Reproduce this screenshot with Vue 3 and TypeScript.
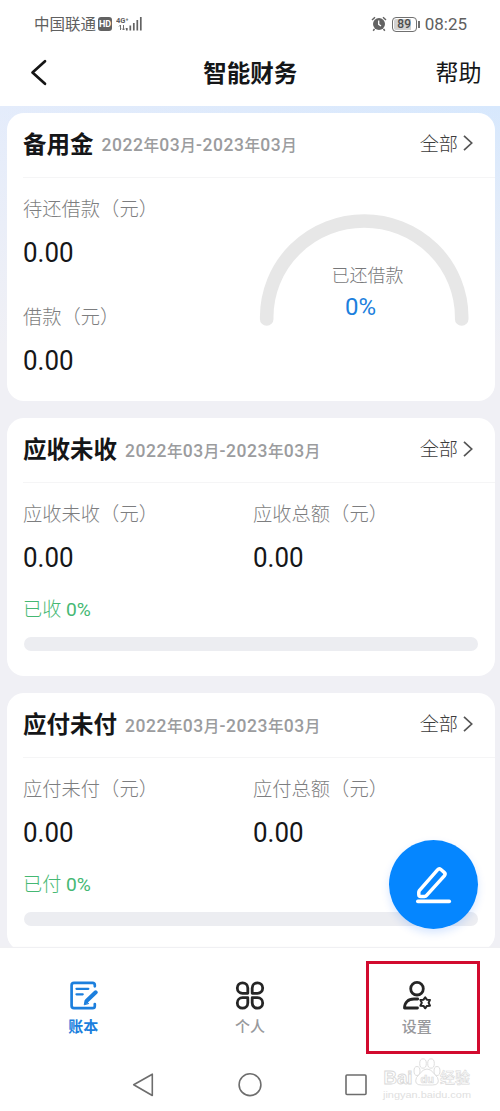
<script setup lang="ts">
interface Metric {
  label: string
  value: string
}

interface LedgerCard {
  title: string
  metrics: Metric[]
  progress: string
}

interface Piece {
  text: string
  numeric: boolean
}

const period = '2022年03月-2023年03月'

const periodPieces: Piece[] = (period.match(/[\d-]+|[^\d-]+/g) ?? []).map((text) => ({
  text,
  numeric: /[\d-]/.test(text),
}))

const pettyCash: Metric[] = [
  { label: '待还借款（元）', value: '0.00' },
  { label: '借款（元）', value: '0.00' },
]

const ledgers: LedgerCard[] = [
  {
    title: '应收未收',
    metrics: [
      { label: '应收未收（元）', value: '0.00' },
      { label: '应收总额（元）', value: '0.00' },
    ],
    progress: '已收',
  },
  {
    title: '应付未付',
    metrics: [
      { label: '应付未付（元）', value: '0.00' },
      { label: '应付总额（元）', value: '0.00' },
    ],
    progress: '已付',
  },
]
</script>

<template>
  <div class="screen" lang="zh-CN">
    <div class="status">
      <span class="carrier">中国联通</span>
      <span class="hd">HD</span>
      <svg class="signal" width="28" height="18" viewBox="0 0 28 18">
        <text x="0" y="8" class="net">4G⁺</text>
        <path d="M4.500 10v5M3 11.500l1.500-1.500M7.500 10v5M6 13.500l1.500 1.500 1.500-1.500" class="arrows" />
        <path d="M10.800 13v2.500M14.300 10.500v5M17.800 8v7.500M21.300 5v10.500M24.800 2v13.500" class="bars" />
      </svg>
      <span class="grow"></span>
      <svg class="alarm" width="16" height="16" viewBox="0 0 16 16">
        <circle cx="8" cy="8" r="6" fill="#626262" />
        <path d="M1 4l3-2.700M15 4l-3-2.700M3.500 13l-1.300 1.700M12.500 13l1.300 1.700" stroke="#626262" stroke-width="1.500" />
        <path d="M7.700 4.500v3.800l2.300 1.700" stroke="#fff" stroke-width="1.300" fill="none" />
      </svg>
      <span class="battery">89</span>
      <span class="battery-tip"></span>
      <span class="clock">08:25</span>
    </div>

    <div class="navbar">
      <svg class="back" width="18" height="28" viewBox="0 0 18 28">
        <path d="M15 2.200L2.500 13.500L15 24.800" fill="none" stroke="#151515" stroke-width="2.700" stroke-linejoin="round" stroke-linecap="round" />
      </svg>
      <h1>智能财务</h1>
      <span class="help">帮助</span>
    </div>

    <main class="content">
      <section class="card first">
        <header>
          <h2>备用金</h2>
          <span class="period"><span v-for="(p, i) in periodPieces" :key="i" :class="{ digits: p.numeric }">{{ p.text }}</span></span>
          <span class="all">全部</span>
          <svg class="chev" width="10" height="18" viewBox="0 0 10 18"><path d="M1 1.800l7.700 7.200L1 16.200" /></svg>
        </header>
        <div class="petty">
          <div class="stack">
            <div v-for="m in pettyCash" :key="m.label" class="metric">
              <div class="label">{{ m.label }}</div>
              <div class="value">{{ m.value }}</div>
            </div>
          </div>
          <div class="gauge">
            <svg width="212" height="116" viewBox="0 0 212 116">
              <path d="M8.700 106v-2a97.500 96 0 0 1 195 0v2" fill="none" stroke="#e7e7e7" stroke-width="13.600" stroke-linecap="round" />
            </svg>
            <div class="gauge-text">
              <span>已还借款</span>
              <b>0%</b>
            </div>
          </div>
        </div>
      </section>

      <section v-for="card in ledgers" :key="card.title" class="card ledger">
        <header>
          <h2>{{ card.title }}</h2>
          <span class="period"><span v-for="(p, i) in periodPieces" :key="i" :class="{ digits: p.numeric }">{{ p.text }}</span></span>
          <span class="all">全部</span>
          <svg class="chev" width="10" height="18" viewBox="0 0 10 18"><path d="M1 1.800l7.700 7.200L1 16.200" /></svg>
        </header>
        <div class="pair">
          <div v-for="m in card.metrics" :key="m.label" class="metric">
            <div class="label">{{ m.label }}</div>
            <div class="value">{{ m.value }}</div>
          </div>
        </div>
        <div class="progress-label">{{ card.progress }} <span>0%</span></div>
        <div class="track"></div>
      </section>
    </main>

    <button class="fab" type="button" aria-label="edit">
      <svg width="38" height="40" viewBox="0 0 38 40">
        <path d="M4.300 26.700L22.500 5.800q1.600-1.800 3.400-.3l3.300 2.900q1.700 1.500.1 3.400L11.600 31.400q-.8 1-2.100 1H5.800q-2 0-2-2v-2.200q0-.8.500-1.500z" fill="none" stroke="#fff" stroke-width="3.500" stroke-linejoin="round" />
        <path d="M2.800 37.400h31.500" stroke="#fff" stroke-width="3.600" stroke-linecap="round" />
      </svg>
    </button>

    <nav class="tabs">
      <div class="tab active">
        <svg width="30" height="30" viewBox="-1 -0.500 30 30" fill="none" stroke="#1c7fdd" stroke-linecap="round" stroke-linejoin="round">
          <path d="M25.800 5.800V4.500q0-2.200-2.200-2.200H5Q2.600 2.300 2.600 4.700v20.600q0 2.400 2.400 2.400h18.600q2.200 0 2.200-2.200v-2" stroke-width="2.700" />
          <path d="M7.500 8.300h11.800M7.500 13.800h6.200" stroke-width="2.300" />
          <path d="M26.700 11.800L17.800 20.300" stroke-width="4" />
          <path d="M15.300 23.900l.9-4.100 3.200 3z" fill="#1c7fdd" stroke-width="1" />
        </svg>
        <span>账本</span>
      </div>
      <div class="tab">
        <svg width="30" height="30" viewBox="0 -0.500 30 30" fill="none" stroke="#252525" stroke-width="2.800" stroke-linejoin="round">
          <path d="M12.800 12.800H7.500A5.250 5.250 0 1 1 12.800 7.500z" />
          <path d="M17.200 12.800h5.300A5.250 5.250 0 1 0 17.200 7.500z" />
          <path d="M12.800 17.200H7.500A5.250 5.250 0 1 0 12.800 22.500z" />
          <path d="M17.200 17.200h5.300A5.250 5.250 0 1 1 17.200 22.500z" />
        </svg>
        <span>个人</span>
      </div>
      <div class="tab">
        <svg width="30" height="30" viewBox="0 0 30 30" fill="none" stroke="#252525" stroke-width="2.800" stroke-linecap="round" stroke-linejoin="round">
          <circle cx="15" cy="8.700" r="6.300" />
          <path d="M15.700 19H12C6 19 2.600 22.500 2.500 28h13" />
          <path d="M23.200 17.300l1.700 2.400 3.100.2-1.400 2.900 1.400 2.900-3.100.2-1.700 2.400-1.700-2.400-3.100-.2 1.400-2.900-1.400-2.900 3.100-.2z" stroke-width="2" />
        </svg>
        <span>设置</span>
      </div>
      <div class="highlight"></div>
    </nav>

    <div class="system">
      <svg width="250" height="30" viewBox="0 0 250 30" fill="none" stroke="#6d6d6d" stroke-width="1.600" stroke-linejoin="round">
        <path d="M27.300 4.200v21.300L8.700 14.700z" />
        <circle cx="125" cy="14.700" r="10.900" />
        <rect x="221" y="5" width="20" height="19.500" rx="1" />
      </svg>
      <div class="mark">
        <svg width="92" height="52" viewBox="0 0 92 52">
          <g fill="#fff" stroke="#dedede" stroke-width="1">
            <ellipse cx="35" cy="14" rx="3" ry="4.500" />
            <ellipse cx="41" cy="6.500" rx="3.300" ry="4.700" />
            <ellipse cx="49" cy="6.500" rx="3.300" ry="4.700" />
            <ellipse cx="55" cy="14" rx="3" ry="4.500" />
            <path d="M45 12q4 0 6.500 4l4 4.500q3 7.500-5 7.500h-11q-8 0-5-7.500l4-4.500q2.500-4 6.500-4z" />
          </g>
          <text x="1.500" y="27" class="mark-big" textLength="29" lengthAdjust="spacingAndGlyphs">Bai</text>
          <text x="38.500" y="26" class="mark-du">du</text>
          <text x="58" y="26" class="mark-cn">经验</text>
          <text x="1" y="40.500" class="mark-url" textLength="88" lengthAdjust="spacingAndGlyphs">jingyan.baidu.com</text>
        </svg>
      </div>
    </div>
  </div>
</template>

<style>
html,
body {
  background: #fff;
}
</style>

<style scoped>
.screen {
  position: relative;
  box-sizing: border-box;
  width: 500px;
  height: 1111px;
  overflow: hidden;
  background: #fff;
  display: flex;
  flex-direction: column;
  font-family: Roboto, "Noto Sans CJK SC", sans-serif;
  color: #151618;
}
.status {
  display: flex;
  align-items: center;
  flex: none;
  height: 48px;
  padding: 0 33px 0 34px;
  box-sizing: border-box;
  color: #606060;
}
.carrier {
  padding-top: 1px;
  font-size: 15.5px;
  line-height: 20px;
}
.hd {
  margin-left: 2px;
  width: 14px;
  height: 14px;
  line-height: 14px;
  border-radius: 3px;
  background: #626262;
  color: #fff;
  text-align: center;
  font-size: 9px;
  font-weight: 700;
}
.signal {
  margin-left: 4px;
}
.net {
  font: 700 7.5px Roboto, sans-serif;
  fill: #606060;
}
.arrows {
  fill: none;
  stroke: #707070;
  stroke-width: 1;
}
.bars {
  stroke: #626262;
  stroke-width: 1.7;
}
.grow {
  flex: 1;
}
.battery {
  margin-left: 5px;
  box-sizing: border-box;
  width: 25px;
  height: 15px;
  line-height: 12px;
  border: 1.5px solid #707070;
  border-radius: 4px;
  background: linear-gradient(90deg, #d2d2d2 80%, #fff 80%);
  box-shadow: inset 0 0 0 1px #fff;
  text-align: center;
  font-size: 12px;
  font-weight: 500;
  color: #4c4c4c;
}
.battery-tip {
  width: 2px;
  height: 7px;
  margin-left: 1px;
  background: #707070;
}
.clock {
  margin-left: 5px;
  font-size: 17px;
  line-height: 20px;
}
.navbar {
  display: flex;
  align-items: center;
  justify-content: space-between;
  flex: none;
  height: 58px;
  padding: 0 18.5px 8px 30px;
  box-sizing: border-box;
}
.back {
  margin-right: 17px;
}
h1 {
  margin: 2px 0 0;
  font-size: 23.5px;
  line-height: 30px;
  font-weight: 700;
}
.help {
  margin-top: 2px;
  font-size: 23px;
  line-height: 30px;
}
.content {
  flex: none;
  height: 842px;
  box-sizing: border-box;
  padding: 6.500px 5.500px 0 7px;
  overflow: hidden;
  display: flex;
  flex-direction: column;
  gap: 17px;
  background: linear-gradient(180deg, rgba(240, 240, 245, 0) 0, #f0f0f5 240px), linear-gradient(90deg, #e4ecfb, #d7e8fd);
}
.card {
  flex: none;
  box-sizing: border-box;
  border-radius: 17px;
  background: #fff;
  padding-left: 16px;
}
.first {
  height: 288.5px;
}
.ledger {
  height: 258px;
}
header {
  display: flex;
  align-items: center;
  height: 65px;
  box-sizing: border-box;
  padding-right: 22px;
  border-bottom: 1.5px solid #f5f5f6;
}
h2 {
  margin: 0;
  font-size: 23.5px;
  line-height: 30px;
  font-weight: 700;
}
.period {
  flex: 1;
  margin-left: 8px;
  padding-top: 2px;
  font-size: 15.6px;
  line-height: 20px;
  font-weight: 500;
  color: #9b9c9e;
  white-space: nowrap;
}
.digits {
  font-size: 17.5px;
  letter-spacing: 0.58px;
}
.all {
  font-size: 19.2px;
  line-height: 24px;
  font-weight: 300;
  color: #3c3c3c;
}
.chev {
  margin-left: 4.5px;
  margin-bottom: 3px;
}
.chev path {
  fill: none;
  stroke: #555;
  stroke-width: 1.7;
}
.petty {
  display: flex;
}
.stack {
  width: 236px;
  padding-top: 18px;
  display: flex;
  flex-direction: column;
  gap: 38px;
}
.metric {
  height: 70px;
}
.label {
  padding-top: 1px;
  font-size: 19.3px;
  line-height: 26px;
  font-weight: 300;
  color: #7d7e80;
  white-space: nowrap;
}
.value {
  margin-top: 15px;
  font-size: 27px;
  line-height: 30px;
  transform: scaleX(0.96);
  transform-origin: 0 50%;
}
.gauge {
  position: relative;
  margin-top: 35px;
  width: 212px;
  height: 116px;
  margin-left: -1.5px;
}
.gauge-text {
  position: absolute;
  inset: 50px 0 0 8px;
  display: flex;
  flex-direction: column;
  align-items: center;
  font-size: 18px;
  line-height: 26px;
  font-weight: 300;
  color: #77787a;
}
.gauge-text b {
  margin-top: 5px;
  margin-right: 14px;
  font-size: 24px;
  font-weight: 400;
  color: #1c7fdd;
}
.pair {
  display: grid;
  grid-template-columns: 230px 1fr;
  padding-top: 18px;
}
.progress-label {
  margin-top: 25px;
  font-size: 19.2px;
  line-height: 28px;
  font-weight: 300;
  color: #45b873;
}
.progress-label span {
  font-weight: 400;
}
.track {
  margin: 13px 16.500px 0 0.500px;
  height: 14px;
  border-radius: 7px;
  background: #ecedf1;
}
.fab {
  position: absolute;
  left: 389px;
  top: 840px;
  width: 89px;
  height: 89px;
  padding: 0 0 2px 0;
  border: 0;
  border-radius: 50%;
  background: #0586ff;
  box-shadow: 0 4px 8px rgba(5, 100, 255, 0.16);
  display: flex;
  align-items: center;
  justify-content: center;
}
.tabs {
  position: relative;
  flex: none;
  display: grid;
  grid-template-columns: repeat(3, 1fr);
  height: 112px;
  box-sizing: border-box;
  padding-top: 32px;
  background: #fff;
  box-shadow: 0 -1px 1px #f0f0f3;
}
.tab {
  display: flex;
  flex-direction: column;
  align-items: center;
  font-size: 15px;
  line-height: 20px;
  font-weight: 500;
  color: #98999c;
}
.tab svg {
  margin-bottom: 7px;
}
.active {
  color: #1c7fdd;
}
.active span {
  font-weight: 700;
}
.highlight {
  position: absolute;
  left: 366px;
  top: 13px;
  width: 114px;
  height: 93px;
  box-sizing: border-box;
  border: 3px solid #d20a2e;
}
.system {
  position: relative;
  flex: none;
  display: flex;
  justify-content: center;
  padding-top: 10px;
  height: 51px;
  box-sizing: border-box;
}
.mark {
  position: absolute;
  left: 382px;
  top: -3px;
}
.mark text {
  fill: #fff;
  stroke: #d9d9d9;
  stroke-width: 0.9px;
}
.mark .mark-big {
  font: 700 18px "Liberation Sans", sans-serif;
}
.mark .mark-du {
  font: 700 11px "Liberation Sans", sans-serif;
  stroke-width: 0.7px;
}
.mark .mark-cn {
  font: 500 15px "Noto Sans CJK SC", sans-serif;
  stroke-width: 0.6px;
}
.mark .mark-url {
  font: 400 9.5px "Liberation Sans", sans-serif;
  fill: #e0e0e0;
  stroke: none;
}
</style>
